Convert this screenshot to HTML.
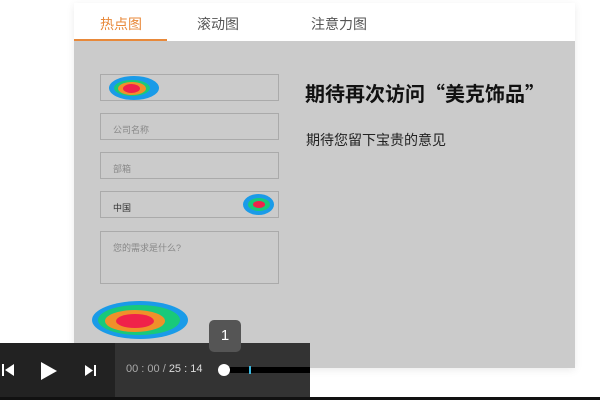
<!DOCTYPE html>
<html><head><meta charset="utf-8"><style>
*{margin:0;padding:0;box-sizing:border-box}
body{width:600px;height:400px;background:#fff;position:relative;overflow:hidden;font-family:"Liberation Sans","Noto Sans CJK SC",sans-serif}
.card{position:absolute;left:74px;top:3px;width:501px;height:365px;box-shadow:0 2px 8px rgba(0,0,0,.08)}
.tabs{height:38px;background:#fff;position:relative}
.tab{position:absolute;top:11px;font-size:14px;color:#555}
.gray{position:absolute;top:38px;left:0;right:0;bottom:0;background:#cbcbcb}
.in{position:absolute;left:26px;width:179px;border:1px solid #aaa;font-size:9px;color:#888;padding:9px 0 0 12px}
.blob{position:absolute;border-radius:50%}
</style></head><body>
<div class="card">
 <div class="tabs">
  <div class="tab" style="left:26px;color:#e8893a">热点图</div>
  <div class="tab" style="left:123px">滚动图</div>
  <div class="tab" style="left:237px">注意力图</div>
  <div style="position:absolute;left:0;top:36px;width:93px;height:3px;background:#e8893a"></div>
 </div>
 <div class="gray">
  <div class="in" style="top:33px;height:27px"></div>
  <div class="in" style="top:72px;height:27px">公司名称</div>
  <div class="in" style="top:111px;height:27px">部箱</div>
  <div class="in" style="top:150px;height:27px;color:#333">中国</div>
  <div class="in" style="top:190px;height:53px">您的需求是什么?</div>
  <div style="position:absolute;left:231px;top:37px;font-size:20px;font-weight:bold;color:#111;font-family:'Noto Sans CJK SC',sans-serif;white-space:nowrap">期待再次访问“美克饰品”</div>
  <div style="position:absolute;left:232px;top:89px;font-size:14px;color:#222">期待您留下宝贵的意见</div>
 </div>
</div>
<div class="blob" style="left:109px;top:76px;width:50px;height:24px;background:#1a9be8"></div>
<div class="blob" style="left:114px;top:80px;width:36px;height:16px;background:#19c97a"></div>
<div class="blob" style="left:118px;top:82px;width:28px;height:13px;background:#f0902a"></div>
<div class="blob" style="left:123px;top:84px;width:17px;height:9px;background:#f0224a"></div>
<div class="blob" style="left:243px;top:194px;width:31px;height:21px;background:#1a9be8"></div>
<div class="blob" style="left:248px;top:198px;width:22px;height:13px;background:#19c97a"></div>
<div class="blob" style="left:253px;top:201px;width:12px;height:7px;background:#f0224a"></div>
<div class="blob" style="left:92px;top:301px;width:96px;height:38px;background:#1a9be8"></div>
<div class="blob" style="left:98px;top:305px;width:82px;height:30px;background:#19c97a"></div>
<div class="blob" style="left:105px;top:310px;width:60px;height:22px;background:#f0902a"></div>
<div class="blob" style="left:116px;top:314px;width:38px;height:14px;background:#f0224a"></div>
<div style="position:absolute;left:0;top:343px;width:115px;height:55px;background:#222"></div>
<div style="position:absolute;left:115px;top:343px;width:195px;height:55px;background:#333"></div>
<div style="position:absolute;left:0;top:397px;width:600px;height:3px;background:#111"></div>
<svg style="position:absolute;left:0;top:360px" width="110" height="22">
 <rect x="2" y="4" width="2" height="12" fill="#fff"/><polygon points="14,4 5,10 14,16" fill="#fff"/>
 <polygon points="41,2 57,11 41,20" fill="#fff"/>
 <polygon points="85,5 93,10.5 85,16" fill="#fff"/><rect x="94" y="5" width="2" height="11" fill="#fff"/>
</svg>
<div style="position:absolute;left:126px;top:363px;font-size:11px;color:#aaa">00 : 00 / <span style="color:#ddd">25 : 14</span></div>
<div style="position:absolute;left:224px;top:367px;width:86px;height:6px;background:#000"></div>
<div style="position:absolute;left:249px;top:366px;width:2px;height:8px;background:#3ab8e0"></div>
<div style="position:absolute;left:218px;top:364px;width:12px;height:12px;border-radius:50%;background:#fff"></div>
<div style="position:absolute;left:209px;top:320px;width:32px;height:32px;border-radius:5px;background:#555;color:#fff;font-size:15px;text-align:center;line-height:32px">1</div>
</body></html>
